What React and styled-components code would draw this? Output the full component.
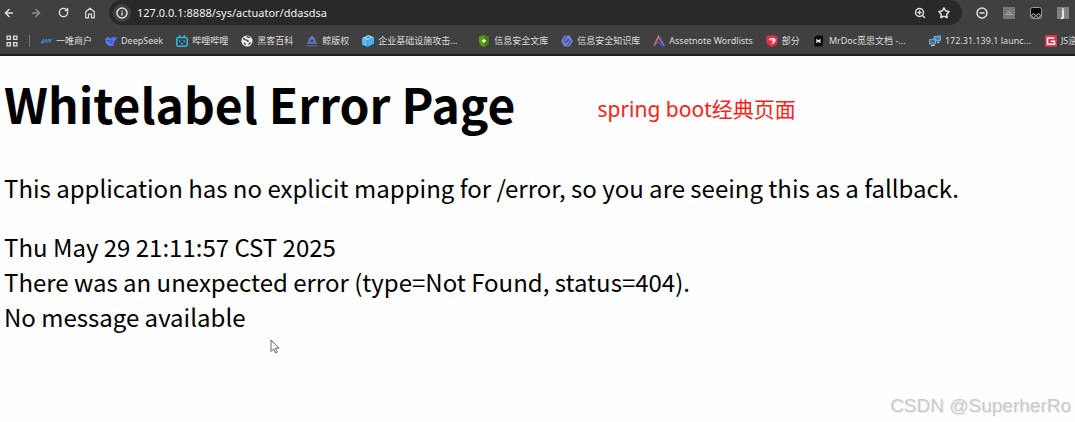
import React, {useState} from "react";
import styled, {createGlobalStyle} from "styled-components";
import {ArrowLeft, ArrowRight, RotateCw, Info, ZoomIn, Star, CircleMinus} from "lucide-react";

const UI_FONT = `"Noto Sans", "Noto Sans CJK SC", sans-serif`;
const PAGE_FONT = `"Noto Sans CJK SC", sans-serif`;

const bookmarks = [
  {title: "一唯商户", icon: <WaveIcon/>},
  {title: "DeepSeek", icon: <DeepSeekIcon/>},
  {title: "哔哩哔哩", icon: <BiliIcon/>},
  {title: "黑客百科", icon: <GlobeIcon/>},
  {title: "鲸版权", icon: <WhaleIcon/>},
  {title: "企业基础设施攻击...", icon: <CubeIcon/>, long: true},
  {title: "信息安全文库", icon: <GreenShieldIcon/>},
  {title: "信息安全知识库", icon: <HexIcon/>},
  {title: "Assetnote Wordlists", icon: <AssetnoteIcon/>},
  {title: "部分", icon: <RedShieldIcon/>},
  {title: "MrDoc觅思文档 -...", icon: <MrDocIcon/>, long: true},
  {title: "172.31.139.1 launc...", icon: <ServerIcon/>, long: true},
  {title: "JS逆向", icon: <GIcon/>},
];

export default function App() {
  const [url, setUrl] = useState("127.0.0.1:8888/sys/actuator/ddasdsa");

  return (
    <Wrapper>
      <GlobalStyle/>
      <Browser>
        <Toolbar>
          <NavButtons>
            <IconButton aria-label="Back"><ArrowLeft size={12} strokeWidth={3}/></IconButton>
            <IconButton aria-label="Forward" $dim><ArrowRight size={12} strokeWidth={3}/></IconButton>
            <IconButton aria-label="Reload"><RotateCw size={11} strokeWidth={3}/></IconButton>
            <IconButton aria-label="Home"><HomeIcon/></IconButton>
          </NavButtons>
          <AddressBar>
            <SiteInfo aria-label="Site information"><Info size={12} strokeWidth={3}/></SiteInfo>
            <AddressInput aria-label="Address" value={url} onChange={(e) => setUrl(e.target.value)}/>
            <IconButton aria-label="Zoom"><ZoomIn size={12} strokeWidth={3}/></IconButton>
            <IconButton aria-label="Bookmark this page"><Star size={12} strokeWidth={3}/></IconButton>
          </AddressBar>
          <Extensions>
            <IconButton aria-label="Blocker"><CircleMinus size={12} strokeWidth={3}/></IconButton>
            <IconButton aria-label="Picture tool"><PictureIcon/></IconButton>
            <IconButton aria-label="Tampermonkey"><MonkeyIcon/></IconButton>
            <IconButton aria-label="J extension"><Letter>j</Letter></IconButton>
          </Extensions>
        </Toolbar>
        <Bookmarks>
          <IconButton aria-label="Apps"><AppsIcon/></IconButton>
          <Separator/>
          {bookmarks.map((item) => (
            <Bookmark href="#" key={item.title}>
              {item.icon}
              <BookmarkTitle $long={item.long}>{item.title}</BookmarkTitle>
            </Bookmark>
          ))}
        </Bookmarks>
      </Browser>
      <Content>
        <TitleRow>
          <Title>Whitelabel Error Page</Title>
          <Note>spring boot经典页面</Note>
        </TitleRow>
        <Message>This application has no explicit mapping for /error, so you are seeing this as a fallback.</Message>
        <Details>
          <div>Thu May 29 21:11:57 CST 2025</div>
          <div>There was an unexpected error (type=Not Found, status=404).</div>
          <div>No message available</div>
        </Details>
      </Content>
      <Pointer viewBox="0 0 10 15" aria-hidden="true">
        <path d="M1 1v11.4l2.700-2.500 1.900 4 1.700-.8-1.900-3.900H9z" fill="#fff" stroke="#555" strokeWidth=".9"/>
      </Pointer>
      <Watermark>CSDN @SuperherRo</Watermark>
    </Wrapper>
  );
}

// Browser icons
function HomeIcon() {
  return (
    <Favicon viewBox="0 0 12 12">
      <path d="M1.700 4.700L6 1.200l4.300 3.500v6.100H7.500V7.200h-3v3.600H1.700z" fill="none" stroke="currentColor" strokeWidth="1.200" strokeLinejoin="round"/>
    </Favicon>
  );
}

function AppsIcon() {
  return (
    <Favicon viewBox="0 0 12 12">
      <path d="M1.100 1.100h3.300v3.300H1.100zM7.600 1.100h3.300v3.300H7.600zM1.100 7.600h3.300v3.300H1.100zM7.600 7.600h3.300v3.300H7.600z" fill="none" stroke="currentColor" strokeWidth="1.300"/>
    </Favicon>
  );
}

// Bookmark icons
function WaveIcon() {
  return (
    <Favicon viewBox="0 0 12 12">
      <path d="M.5 7.800C2 8 4.400 5.700 4 4.500 3.500 3.500 1.500 6.300 2.300 7.800 3.200 9.300 5.200 6.500 6.200 4.200 5.700 6.800 6 8.400 7 7.300 8.200 6 8.500 3.800 9.200 4 9.800 4.300 9 7.300 9.600 7.200 10.300 7 11 5 11.300 3.500" fill="none" stroke="#3d9be0" strokeWidth="1"/>
    </Favicon>
  );
}

function DeepSeekIcon() {
  return (
    <Favicon viewBox="0 0 12 12">
      <path d="M.3 4.300C.8 2.300 2.800 2 4.500 2.500L6 4C6.300 2.500 7.200 1.500 7.800 1.700 8 2.700 9.500 2.900 11.900 1.900 11.700 4.300 10.800 5.200 9.700 5.500 9.500 7.300 8.900 8.600 8 9.400L9.300 10.400C5.500 12.300.2 10.500.3 4.300z" fill="#5873f5"/>
      <path d="M2.400 5.500c1.700-.6 3.500 1.700 5 3.200M6.300 5.300l1.600 1.400" fill="none" stroke="#303754" strokeWidth=".8"/>
    </Favicon>
  );
}

function BiliIcon() {
  return (
    <Favicon viewBox="0 0 12 12">
      <path d="M3 .3l1.700 2.200M9 .3L7.300 2.500" stroke="#28b9e5" strokeWidth="1.300"/>
      <rect x=".8" y="2.500" width="10.400" height="8.700" rx="1.400" fill="none" stroke="#28b9e5" strokeWidth="1.500"/>
      <path d="M3.800 5.200v2M8.200 5.200v2M5 8.700h2" stroke="#28b9e5" strokeWidth="1.200"/>
    </Favicon>
  );
}

function GlobeIcon() {
  return (
    <Favicon viewBox="0 0 12 12">
      <circle cx="6" cy="6" r="5.600" fill="#e9e9e9"/>
      <path d="M2 3.500c1.700-.2 1.500 1.500 3.300 1.600 1.400.1 2.400.9 1.400 2.100M5.500 1.600c1 .9 2.700.3 3.600 1.100M7.500 9.500c.4-1.200 1.600-1.500 2.700-1.600M3 8l1.600 1.700" fill="none" stroke="#444" strokeWidth="1.300"/>
    </Favicon>
  );
}

function WhaleIcon() {
  return (
    <Favicon viewBox="0 0 12 12">
      <path d="M.5 8.800c1.700-.6 1.800-2.900 2.400-5L6 .5l3.100 3.300c.6 2.100.7 4.400 2.400 5z" fill="#6375ca"/>
      <path d="M5 4.500h2l.6 2.800H4.400z" fill="#404052"/>
      <path d="M.5 10.800h11" stroke="#6375ca" strokeWidth=".8"/>
    </Favicon>
  );
}

function CubeIcon() {
  return (
    <Favicon viewBox="0 0 12 12">
      <path d="M0 3l6.500-3L12 2.300 5.500 5.500z" fill="#8dd7fa"/>
      <path d="M0 3l5.500 2.500V12L0 9.400z" fill="#58bcf4"/>
      <path d="M12 2.300L5.500 5.500V12L12 8.700z" fill="#4cb0ec"/>
      <path d="M4 2.800l3-1.200 1.500.7-3 1.300z" fill="#2d83c3"/>
    </Favicon>
  );
}

function GreenShieldIcon() {
  return (
    <Favicon viewBox="0 0 12 12">
      <path d="M6 .2l5 1.500v4.700C11 9 8.800 10.800 6 11.900 3.200 10.800 1 9 1 6.400V1.700z" fill="#5b9e13"/>
      <path d="M6 .2l5 1.500v4.700C11 9 8.800 10.800 6 11.900z" fill="#42820b"/>
      <path d="M6 3.900l.7 1.300 1.400.7-1.400.7L6 7.900l-.7-1.300-1.400-.7 1.400-.7z" fill="#fff" stroke="#fff" strokeWidth=".5"/>
    </Favicon>
  );
}

function HexIcon() {
  return (
    <Favicon viewBox="0 0 12 12">
      <path d="M3.300.5h5.400L12 6l-3.300 5.500H3.300L0 6z" fill="#737bd6"/>
      <path d="M5.800.8L2.600 5.500 5 7.500 7.300 4.200M6.200 11.200L9.400 6.500 7 4.500 4.700 7.800" fill="none" stroke="#3c3e67" strokeWidth=".8"/>
    </Favicon>
  );
}

function AssetnoteIcon() {
  return (
    <Favicon viewBox="0 0 12 12">
      <path d="M1 11l4.500-9.500L7 4.300" fill="none" stroke="#d96d62" strokeWidth="1.700"/>
      <path d="M6 2l5 9" stroke="#8261d0" strokeWidth="2"/>
      <path d="M1 10.800l4-4 4.200 3.700" fill="none" stroke="#6855c0" strokeWidth="1.200"/>
    </Favicon>
  );
}

function RedShieldIcon() {
  return (
    <Favicon viewBox="0 0 12 12">
      <path d="M6 0l5.700 1.500V6c0 3-2.700 5-5.700 6C3 11 .3 9 .3 6V1.500z" fill="#e52f4e"/>
      <path d="M2.500 4.800c2-2.300 5.600-2.400 6.900-.5.700 2.500-1.300 4.400-4.700 5 1.700-1.200 2.300-1.900 2.200-3z" fill="#fff"/>
      <path d="M4 5.200l3-.7M5 6.300l2.500-.5" stroke="#e52f4e" strokeWidth=".7"/>
    </Favicon>
  );
}

function MrDocIcon() {
  return (
    <Favicon viewBox="0 0 12 12">
      <path d="M3.500.5H10v9.300l-1.500 1.700H1.300V2.700z" fill="#0b0b0b"/>
      <path d="M3.900 8V4.800l1.500 1.600 1.500-1.600V8" fill="none" stroke="#fff" strokeWidth="1.100"/>
    </Favicon>
  );
}

function ServerIcon() {
  return (
    <Favicon viewBox="0 0 12 12">
      <path d="M5 1.500l6.500-.7v4.700L5 6z" fill="#398bd0" stroke="#b9d8ed" strokeWidth=".6"/>
      <path d="M.5 4.500l6-.5v4.500l-6 .6z" fill="#2f75bb" stroke="#b9d8ed" strokeWidth=".6"/>
      <path d="M2 10.600l4-.5M8 7.500l2.500-.3" stroke="#c8d4dc" strokeWidth="1.200"/>
    </Favicon>
  );
}

function GIcon() {
  return (
    <Favicon viewBox="0 0 12 12">
      <rect width="12" height="12" fill="#e2304b"/>
      <path d="M9.500 3h-7v6.200h7V6.300H5.800" fill="none" stroke="#fff" strokeWidth="1.500"/>
    </Favicon>
  );
}

// Extension icons
function PictureIcon() {
  return (
    <Favicon viewBox="0 0 12 12">
      <rect width="12" height="12" fill="#777"/>
      <path d="M2.500 7.500h7M4 6l1.500-1.500L7 6l1-.8" fill="none" stroke="#bbb" strokeWidth=".9"/>
    </Favicon>
  );
}

function MonkeyIcon() {
  return (
    <Favicon viewBox="0 0 12 12">
      <rect x=".5" y=".5" width="11" height="11" rx="2" fill="#080808" stroke="#b8b8b8" strokeWidth=".8"/>
      <circle cx="3.500" cy="8.700" r="1.900" fill="#222" stroke="#d8d8d8" strokeWidth=".8"/>
      <circle cx="8.500" cy="8.700" r="1.900" fill="#222" stroke="#d8d8d8" strokeWidth=".8"/>
    </Favicon>
  );
}

const GlobalStyle = createGlobalStyle`
  * {
    box-sizing: border-box;
  }

  body {
    margin: 0;
    background: #fefefe;
  }
`;
const Wrapper = styled.div`
  position: relative;
  min-height: 100vh;
  overflow: hidden;
`;
const Browser = styled.header`
  background: #404040;
  border-bottom: 2px solid #1c1c1c;
  font-family: ${UI_FONT};
  color: #e4e4e4;
`;
const Toolbar = styled.div`
  display: flex;
  align-items: center;
  height: 25px;
`;
const NavButtons = styled.nav`
  display: flex;
  gap: 15px;
  padding: 0 13px 0 3px;
`;
const IconButton = styled.button`
  display: flex;
  align-items: center;
  justify-content: center;
  flex: none;
  min-width: 12px;
  padding: 0;
  border: 0;
  background: none;
  color: ${(props) => (props.$dim ? "#8c8c8c" : "#dedede")};
`;
const AddressBar = styled.div`
  display: flex;
  align-items: center;
  flex: 1;
  gap: 12px;
  height: 25px;
  padding: 0 12px 0 4px;
  border-radius: 13px;
  background: #292929;
`;
const SiteInfo = styled(IconButton)`
  width: 18px;
  height: 18px;
  border-radius: 50%;
  background: #404040;
`;
const AddressInput = styled.input`
  flex: 1;
  min-width: 0;
  margin-left: -6px;
  padding: 0;
  border: 0;
  outline: 0;
  background: none;
  color: #f0f0f0;
  font: 11px ${UI_FONT};
`;
const Extensions = styled.div`
  display: flex;
  gap: 15px;
  padding: 0 6px 0 14px;
`;
const Letter = styled.span`
  width: 12px;
  height: 12px;
  background: #808080;
  color: #fff;
  font: bold 10px/10px ${UI_FONT};
  text-align: center;
`;
const Bookmarks = styled.nav`
  display: flex;
  align-items: center;
  gap: 13px;
  height: 29px;
  padding: 2px 0 0 6px;
  overflow: hidden;
`;
const Separator = styled.span`
  flex: none;
  width: 1px;
  height: 12px;
  margin: 0 -3px 0 -2px;
  background: #777;
`;
const Bookmark = styled.a`
  display: flex;
  align-items: center;
  flex: none;
  gap: 4px;
  color: #dedede;
  text-decoration: none;
`;
const BookmarkTitle = styled.span`
  min-width: ${(props) => (props.$long ? "87px" : "0")};
  font-size: 9px;
  line-height: 14px;
  white-space: nowrap;
`;
const Favicon = styled.svg`
  flex: none;
  width: 12px;
  height: 12px;
`;
const Content = styled.main`
  padding: 12px 4px;
  color: #000;
  font-family: ${PAGE_FONT};
  font-size: 24px;
  line-height: 35px;
`;
const TitleRow = styled.div`
  display: flex;
  align-items: center;
  flex-wrap: wrap;
  gap: 0 82px;
`;
const Title = styled.h1`
  margin: 0;
  font-size: 48px;
  line-height: 70px;
`;
const Note = styled.span`
  padding-top: 12px;
  color: #fc2016;
  font: 21px/30px ${UI_FONT};
`;
const Message = styled.p`
  margin: 32px 0 24px;
`;
const Details = styled.div`
  margin: 0;
`;
const Pointer = styled.svg`
  position: absolute;
  top: 339px;
  left: 270px;
  width: 10px;
  height: 15px;
`;
const Watermark = styled.span`
  position: absolute;
  right: 4px;
  bottom: 5px;
  color: #cacaca;
  font: 19px/22px "Liberation Sans", sans-serif;
  text-shadow: 1px 1px 0 #ececec;
`;
